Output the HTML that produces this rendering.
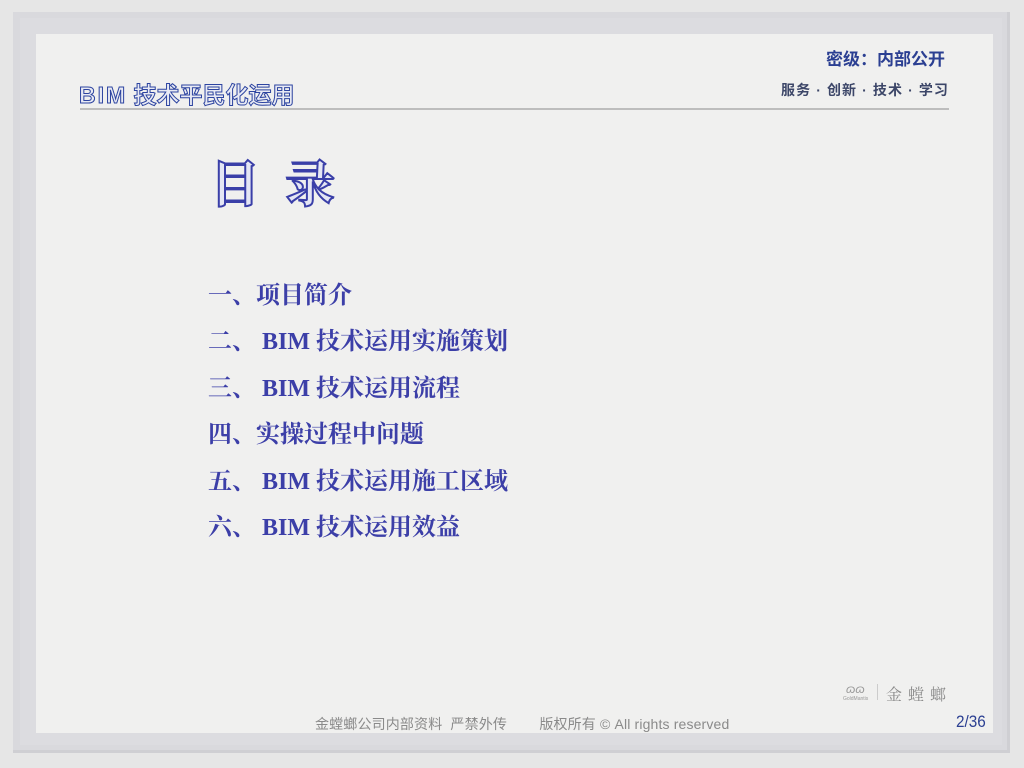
<!DOCTYPE html>
<html><head><meta charset="utf-8"><style>
body{margin:0;width:1024px;height:768px;background:#e6e6e6;position:relative;overflow:hidden;font-family:"Liberation Sans","Noto Sans CJK SC",sans-serif}
.frame{position:absolute;left:13px;top:12px;width:997px;height:741px;background:#d9d9dd;border-right:3px solid #cfcfd3;border-bottom:3px solid #cfcfd3;box-sizing:border-box}
.frame2{position:absolute;left:20px;top:18px;width:982px;height:727px;background:#dcdce0}
.panel{position:absolute;left:36px;top:34px;width:957px;height:699px;background:#f0f0ef}
.t{position:absolute;white-space:nowrap}
.hollow{color:#e8eaf4;-webkit-text-stroke:1px #2d44a0}
.item{position:absolute;left:208px;font-family:"Liberation Serif","Noto Serif CJK SC",serif;font-size:24px;color:#3c3fa8;font-weight:bold;white-space:nowrap}
</style></head><body>
<div class="frame"></div><div class="frame2"></div>
<div class="panel"></div>
<div class="t hollow" style="left:79px;top:76px;font-size:23px;font-weight:bold;letter-spacing:0px"><span style="letter-spacing:2px">BIM</span> 技术平民化运用</div>
<div class="t" style="left:826px;top:45px;font-size:17px;font-weight:bold;color:#2b3f92;letter-spacing:0">密级：内部公开</div>
<div class="t" style="left:781px;top:80px;font-size:14px;font-weight:bold;color:#3c4668;letter-spacing:1.1px">服务 · 创新 · 技术 · 学习</div>
<div style="position:absolute;left:80px;top:108px;width:869px;height:2px;background:#bdbdbd"></div>
<div class="t" style="left:210px;top:145px;font-size:50px;font-weight:bold;color:#e4e6f4;-webkit-text-stroke:2px #3a3fa8;font-family:'Liberation Serif','Noto Serif CJK SC',serif">目&nbsp;&nbsp;录</div>
<div class="item" style="top:275px">一、项目简介</div>
<div class="item" style="top:321px">二、 BIM 技术运用实施策划</div>
<div class="item" style="top:368px">三、 BIM 技术运用流程</div>
<div class="item" style="top:414px">四、实操过程中问题</div>
<div class="item" style="top:461px">五、 BIM 技术运用施工区域</div>
<div class="item" style="top:507px">六、 BIM 技术运用效益</div>
<div class="t" style="left:846px;top:682px;font-size:12px;color:#999;font-style:italic">ɷɷ</div>
<div class="t" style="left:843px;top:696px;font-size:5px;color:#999">GoldMantis</div>
<div style="position:absolute;left:877px;top:684px;width:1px;height:16px;background:#ccc"></div>
<div class="t" style="left:886px;top:682px;font-size:16px;color:#8a8a8a;letter-spacing:6px;font-family:'Liberation Serif','Noto Serif CJK SC',serif">金螳螂</div>
<div class="t" style="left:315px;top:714px;font-size:14px;color:#8a8a8a;letter-spacing:0.15px">金螳螂公司内部资料&nbsp; 严禁外传&nbsp;&nbsp;&nbsp;&nbsp;&nbsp;&nbsp;&nbsp; 版权所有 © All rights reserved</div>
<div class="t" style="left:956px;top:712px;font-size:17px;color:#2b3f92;transform:scaleX(0.9);transform-origin:left">2/36</div>
</body></html>
